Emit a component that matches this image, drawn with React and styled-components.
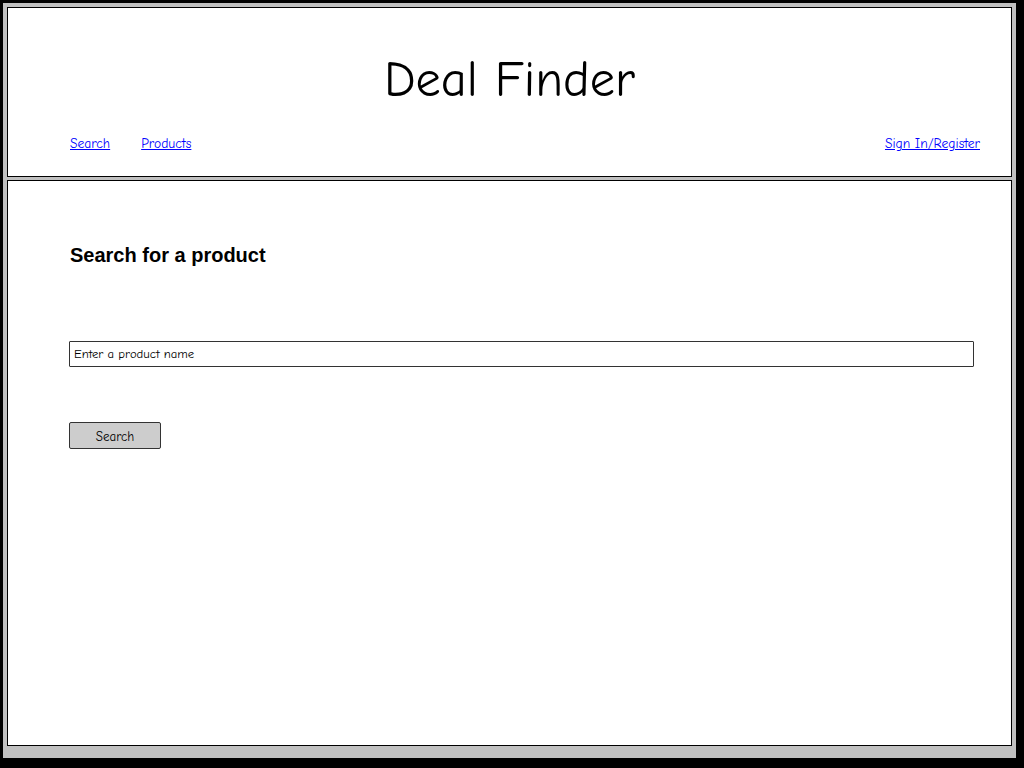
import styled, { createGlobalStyle } from "styled-components";

const GlobalStyle = createGlobalStyle`
  html, body {
    margin: 0;
    padding: 0;
    background: #000;
  }
  * { box-sizing: border-box; }
`;

const hand = `"Comic Sans MS", "Comic Neue", cursive`;

const Frame = styled.div`
  width: 1024px;
  height: 768px;
  background: #c0c0c0;
  border-style: solid;
  border-color: #000;
  border-width: 3px 8px 10px 3px;
  padding: 4px 4px 12px 4px;
  display: flex;
  flex-direction: column;
  gap: 3px;
`;

const Panel = styled.div`
  background: #fff;
  border: 1px solid #000;
  flex: ${p => (p.grow ? "1" : "none")};
  height: ${p => p.h || "auto"};
`;

const Header = styled(Panel)`
  display: flex;
  flex-direction: column;
`;

const Title = styled.h1`
  margin: 43px 0 0 0;
  text-align: center;
  font-family: ${hand};
  font-weight: 400;
  font-size: 50.4px;
  line-height: 58px;
  color: #000;
`;

const Nav = styled.nav`
  display: flex;
  align-items: center;
  margin-top: 27px;
  padding: 0 31px 0 62px;
  gap: 31px;
`;

const NavLink = styled.a`
  font-family: ${hand};
  font-size: 13.6px;
  color: #0000ff;
  text-decoration: underline;
  margin-left: ${p => (p.right ? "auto" : "0")};
  cursor: pointer;
`;

const Main = styled(Panel)`
  padding: 62px 38px 0 62px;
  display: flex;
  flex-direction: column;
`;

const Heading = styled.h2`
  margin: 0;
  font-family: "Liberation Sans", Arial, sans-serif;
  font-weight: 700;
  font-size: 20px;
  line-height: 24px;
  color: #000;
`;

const Input = styled.input`
  margin-top: 74px;
  margin-left: -1px;
  width: 905px;
  height: 26px;
  border: 1px solid #333;
  border-radius: 1px;
  padding: 0 4px 1px;
  font-family: ${hand};
  font-size: 12.7px;
  color: #000;
  outline: none;
  &::placeholder { color: #000; }
`;

const Button = styled.button`
  margin-top: 55px;
  margin-left: -1px;
  width: 92px;
  height: 27px;
  background: #cdcdcd;
  border: 1px solid #333;
  border-radius: 2px;
  font-family: ${hand};
  font-size: 13px;
  color: #000;
  padding: 1px 0 0;
  cursor: pointer;
`;

export default function App() {
  return (
    <>
      <GlobalStyle />
      <Frame>
        <Header h="170px">
          <Title>Deal Finder</Title>
          <Nav>
            <NavLink>Search</NavLink>
            <NavLink>Products</NavLink>
            <NavLink right>Sign In/Register</NavLink>
          </Nav>
        </Header>
        <Main grow>
          <Heading>Search for a product</Heading>
          <Input placeholder="Enter a product name" />
          <Button>Search</Button>
        </Main>
      </Frame>
    </>
  );
}
